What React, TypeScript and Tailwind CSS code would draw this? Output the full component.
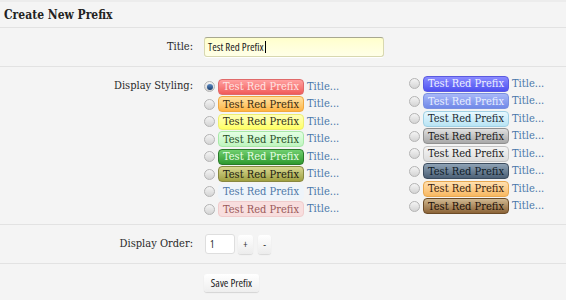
import React from "react";

const leftStyles: string[] = [
  "bg-gradient-to-b from-[#ffa0a0] to-[#f05a5a] border-[#e06a6a] text-[#ffe4e4]",
  "bg-gradient-to-b from-[#ffe3a0] to-[#ffb440] border-[#f0a840] text-[#3a2a10]",
  "bg-gradient-to-b from-[#ffffb8] to-[#ffff60] border-[#eeee70] text-[#333318]",
  "bg-gradient-to-b from-[#e4ffe4] to-[#bff5bf] border-[#a8e8a8] text-[#285028]",
  "bg-gradient-to-b from-[#6fcf6f] to-[#2e9a2e] border-[#2a7a2a] text-[#e6ffe6]",
  "bg-gradient-to-b from-[#d8d890] to-[#a0a040] border-[#888840] text-[#202010]",
  "bg-[#eef4fa] border-[#eef4fa] text-[#4f78a8]",
  "bg-[#f8dede] border-[#f0cccc] text-[#9a5a5a]",
];

const rightStyles: string[] = [
  "bg-gradient-to-b from-[#8a8aff] to-[#5050f0] border-[#5a5ae0] text-[#eef0ff]",
  "bg-gradient-to-b from-[#a8b8f8] to-[#7088e8] border-[#7a90e0] text-[#e8eeff]",
  "bg-gradient-to-b from-[#e8f8ff] to-[#b8e4f4] border-[#a0d0e4] text-[#1c2c34]",
  "bg-gradient-to-b from-[#e0e0e0] to-[#a8a8a8] border-[#909090] text-[#202020]",
  "bg-gradient-to-b from-[#f4f4f4] to-[#dcdcdc] border-[#c4c4c4] text-[#202020]",
  "bg-gradient-to-b from-[#8fa3b6] to-[#4c6076] border-[#3c4c5e] text-[#101c28]",
  "bg-gradient-to-b from-[#ffe0b0] to-[#f8b860] border-[#e8a850] text-[#3a2410]",
  "bg-gradient-to-b from-[#d0b890] to-[#8c6438] border-[#6c4c28] text-[#1c1008]",
];

const serif = "font-['DejaVu_Serif_Condensed','DejaVu_Serif',serif] [font-stretch:condensed]";
const sans = "font-['Open_Sans','Liberation_Sans',sans-serif]";

function Radio({ checked }: { checked?: boolean }) {
  return (
    <span className="relative inline-flex h-[11px] w-[11px] shrink-0 items-center justify-center rounded-full border border-[#b4b4b4] bg-gradient-to-b from-[#f4f4f4] to-[#d4d4d4]">
      {checked && (
        <span className="h-[6px] w-[6px] rounded-full bg-gradient-to-b from-[#5a8ac4] to-[#1c3f6e]" />
      )}
    </span>
  );
}

function Option({ cls, checked }: { cls: string; checked?: boolean }) {
  return (
    <div className="flex h-[17.5px] items-center whitespace-nowrap">
      <Radio checked={checked} />
      <span
        className={`ml-[3px] flex h-[16px] w-[86px] items-center justify-center rounded-[4px] border text-[11px] leading-none ${cls}`}
      >
        Test Red Prefix
      </span>
      <span className="ml-[3px] text-[11px] text-[#4a78aa]">Title...</span>
    </div>
  );
}

export default function App() {
  return (
    <div className={`h-[300px] w-[566px] overflow-hidden bg-[#f4f4f4] text-[#2a2a2a] ${serif}`}>
      <div className="h-[2px] bg-[#ececec]" />
      <div className="flex h-[26px] items-center border-b border-[#e2e2e2] pl-[4px]">
        <h2 className="text-[12px] font-bold text-[#222]">Create New Prefix</h2>
      </div>
      {/* Title row */}
      <div className="flex h-[39px] items-center border-b border-[#e2e2e2]">
        <div className="w-[193px] text-right text-[11px]">Title:</div>
        <div className="ml-[11px] flex h-[20px] w-[180px] items-center rounded-[3px] border border-[#d8d8b0] border-t-[#a8a890] bg-gradient-to-b from-[#ffffcc] to-[#ffffe8] pl-[3px] shadow-[0_1px_0_#fff]">
          <span className={`${sans} text-[11px] text-[#222]`}>Test Red Prefix</span>
          <span className="ml-[1px] h-[12px] w-[1px] bg-black" />
        </div>
      </div>
      {/* Display styling row */}
      <div className="flex h-[158px] border-b border-[#e2e2e2] pt-[8px]">
        <div className="w-[193px] pt-[3px] text-right text-[11px]">Display Styling:</div>
        <div className="ml-[11px] flex">
          <div className="mt-[3px] w-[205px]">
            {leftStyles.map((c, i) => (
              <Option key={i} cls={c} checked={i === 0} />
            ))}
          </div>
          <div>
            {rightStyles.map((c, i) => (
              <Option key={i} cls={c} />
            ))}
          </div>
        </div>
      </div>
      {/* Display order */}
      <div className="flex h-[39px] items-center border-b border-[#e2e2e2]">
        <div className="w-[193px] text-right text-[11px]">Display Order:</div>
        <div className={`ml-[12px] flex items-center ${sans}`}>
          <div className="flex h-[20px] w-[30px] items-center rounded-[3px] border border-[#dedede] bg-white pl-[4px] text-[10px]">
            1
          </div>
          <button className="ml-[3px] flex h-[19px] w-[15px] items-center justify-center rounded-[3px] bg-gradient-to-b from-[#ffffff] to-[#ececec] text-[10px] text-[#333] shadow-[0_1px_1px_#d8d8d8]">
            +
          </button>
          <button className="ml-[5px] flex h-[19px] w-[13px] items-center justify-center rounded-[3px] bg-gradient-to-b from-[#ffffff] to-[#ececec] text-[10px] text-[#333] shadow-[0_1px_1px_#d8d8d8]">
            -
          </button>
        </div>
      </div>
      {/* Save */}
      <div className="flex pt-[10px]">
        <div className="w-[193px]" />
        <button
          className={`${sans} ml-[11px] flex h-[18px] w-[55px] items-center justify-center rounded-[3px] bg-gradient-to-b from-[#ffffff] to-[#eeeeee] text-[11px] text-[#222] shadow-[0_1px_1px_#d4d4d4]`}
        >
          Save Prefix
        </button>
      </div>
    </div>
  );
}
